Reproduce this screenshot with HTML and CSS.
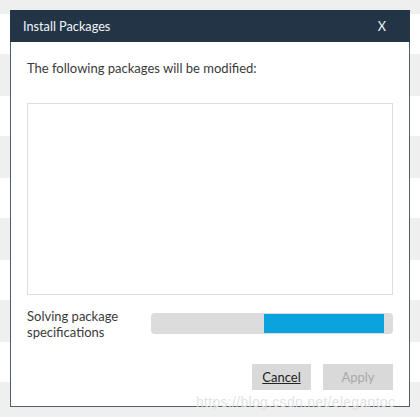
FILE: index.html
```html
<!DOCTYPE html>
<html>
<head>
<meta charset="utf-8">
<link rel="stylesheet" href="styles.css">
</head>
<body>
<div class="dialog">
  <div class="header">
    <span class="title">Install Packages</span>
    <span class="close">X</span>
  </div>
  <div class="content">
    <div class="intro">The following packages will be modified:</div>
    <div class="list"></div>
    <div class="progress-row">
      <div class="label">Solving package<br>specifications</div>
      <div class="bar"><div class="fill"></div></div>
    </div>
    <div class="actions">
      <button class="btn cancel">Cancel</button>
      <button class="btn apply" disabled>Apply</button>
    </div>
  </div>
</div>
<div class="watermark">https://blog.csdn.net/elegantoc</div>
</body>
</html>
```
FILE: styles.css
```css
html, body {
  margin: 0;
  padding: 0;
}
body {
  width: 420px;
  height: 417px;
  overflow: hidden;
  position: relative;
  font-family: Lato, "Noto Sans", sans-serif;
  font-size: 13px;
  color: #333;
  background: repeating-linear-gradient(to bottom, #efefef 0px, #efefef 42px, #ffffff 42px, #ffffff 82px);
  background-position: 0 -28px;
  padding-top: 10px;
  box-sizing: border-box;
}
.dialog {
  margin-left: 10px;
  width: 400px;
  height: 397px;
  box-sizing: border-box;
  border: 1px solid #4d6166;
  border-top-color: #243447;
  background: #fff;
  display: flex;
  flex-direction: column;
}
.header {
  height: 32px;
  margin: -1px -1px 0 -1px;
  background: #243447;
  color: #f2f4f6;
  display: flex;
  align-items: center;
  justify-content: space-between;
  padding: 0 24px 0 13px;
  font-size: 12.7px;
  flex: none;
}
.content {
  flex: 1;
  display: flex;
  flex-direction: column;
  padding: 18px 16px 16px 16px;
}
.intro {
  line-height: 16px;
  height: 16px;
  color: #3a3a3a;
}
.list {
  margin-top: 27px;
  height: 192px;
  box-sizing: border-box;
  border: 1px solid #dedede;
  background: #fff;
}
.progress-row {
  margin-top: 13px;
  height: 32px;
  display: flex;
  align-items: center;
}
.label {
  width: 124px;
  line-height: 16px;
  color: #3a3a3a;
  flex: none;
}
.bar {
  flex: 1;
  height: 21px;
  box-sizing: border-box;
  border-radius: 4px;
  background: #dcdcdc;
  display: flex;
  padding: 1px 0;
  margin-top: -2px;
}
.fill {
  margin-left: 113px;
  width: 120px;
  background: #0ba3de;
}
.actions {
  margin-top: 24px;
  display: flex;
  justify-content: flex-end;
  gap: 12px;
}
.btn {
  height: 26px;
  border: none;
  border-radius: 0;
  font-family: Lato, "Noto Sans", sans-serif;
  font-size: 13px;
  padding: 0;
  background: #d9d9d9;
}
.cancel {
  width: 59px;
  color: #222;
  text-decoration: underline;
}
.apply {
  width: 70px;
  color: #a9a9a9;
}
.watermark {
  position: absolute;
  left: 196px;
  top: 394px;
  font-family: "Liberation Sans", sans-serif;
  font-size: 14px;
  color: rgba(222, 222, 222, 0.9);
  letter-spacing: 0.3px;
}
```
